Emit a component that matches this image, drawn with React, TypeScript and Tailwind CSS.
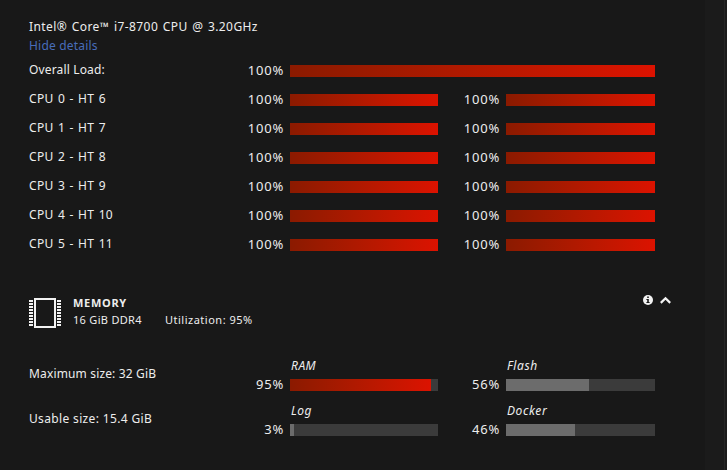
import { clsx } from 'clsx';

type Meter = { label: string; value: number };

const threads = [
  'CPU 0 - HT 6',
  'CPU 1 - HT 7',
  'CPU 2 - HT 8',
  'CPU 3 - HT 9',
  'CPU 4 - HT 10',
  'CPU 5 - HT 11'
];

const memoryRows: { text: string; tracking: string; left: Meter; right: Meter }[] = [
  {
    text: 'Maximum size: 32 GiB',
    tracking: 'tracking-[0.15px]',
    left: { label: 'RAM', value: 95 },
    right: { label: 'Flash', value: 56 }
  },
  {
    text: 'Usable size: 15.4 GiB',
    tracking: 'tracking-[0.35px]',
    left: { label: 'Log', value: 3 },
    right: { label: 'Docker', value: 46 }
  }
];

function Bar({ value }: { value: number }) {
  return (
    <div className="h-3 w-full bg-[#3b3b3b]">
      <div
        className={clsx(
          'h-full',
          value >= 90 ? 'bg-linear-to-r from-[#8b1a00] to-[#dc1200]' : 'bg-[#6c6c6c]'
        )}
        style={{ width: `${value}%` }}
      />
    </div>
  );
}

function Percent({ value }: { value: number }) {
  return (
    <span className="-mt-px pr-1.5 text-right text-[13px] leading-3 tracking-[0.8px]">{value}%</span>
  );
}

function MemoryIcon() {
  const pins = [2, 5, 8, 11, 14, 17, 20, 23, 26];
  return (
    <svg width="33" height="30" viewBox="0 0 33 30" fill="#f2f2f2" shapeRendering="crispEdges">
      <path fillRule="evenodd" d="M5 0h22v30H5zM7 2v26h18V2z" />
      {pins.map((y) => (
        <path key={y} d={`M0 ${y}h4v2H0zM28 ${y}h4v2h-4z`} />
      ))}
    </svg>
  );
}

export default function App() {
  return (
    <div className="flex h-[470px] w-[727px] bg-[#181818] font-['Noto_Sans',sans-serif] text-[12px] text-[#ededed]">
      <main className="w-[705px] pt-[17px] pl-[29px]">
        <div className="leading-[19px]">
          <p className="tracking-[0.42px] [word-spacing:1px]">Intel® Core™ i7-8700 CPU @ 3.20GHz</p>
          <a className="block tracking-[0.2px] text-[#486dba]">Hide details</a>
        </div>

        <section className="mt-[10px]">
          <div className="grid h-[29px] grid-cols-[211px_50px_365px]">
            <span className="-mt-1 leading-[18px] tracking-[0.15px]">Overall Load:</span>
            <Percent value={100} />
            <Bar value={100} />
          </div>
          {threads.map((name) => (
            <div key={name} className="grid h-[29px] grid-cols-[211px_50px_148px_68px_149px]">
              <span className="-mt-1 leading-[18px] tracking-[0.3px] [word-spacing:1px]">{name}</span>
              <Percent value={100} />
              <Bar value={100} />
              <Percent value={100} />
              <Bar value={100} />
            </div>
          ))}
        </section>

        <header className="mt-[30px] flex h-[30px] w-[642px]">
          <MemoryIcon />
          <div className="-mt-[3px] ml-[11px]">
            <h2 className="text-[11px] leading-4 font-bold tracking-[0.7px]">MEMORY</h2>
            <p className="mt-px flex text-[11px] leading-4">
              <span className="w-[92px] tracking-[0.3px]">16 GiB DDR4</span>
              <span className="tracking-[0.5px]">Utilization: 95%</span>
            </p>
          </div>
          <div className="-mt-1 ml-auto flex h-3 items-center gap-[7px]">
            <svg width="10" height="10" viewBox="0 0 10 10">
              <circle cx="5" cy="5" r="5" fill="#f2f2f2" />
              <path d="M4.2 1.4h1.6v1.5H4.2zM3.4 4h2.4v3h.8v1.1H3.4V7h.8V5h-.8z" fill="#181818" />
            </svg>
            <svg width="11" height="8" viewBox="0 0 11 8" fill="none" stroke="#f2f2f2" strokeWidth="2.2">
              <path d="M.8 6.9 5.5 2.2l4.7 4.7" />
            </svg>
          </div>
        </header>

        <section className="mt-[29px]">
          {memoryRows.map(({ text, tracking, left, right }) => (
            <div key={text} className="grid h-[45px] grid-cols-[211px_50px_148px_68px_149px] grid-rows-[22px_12px]">
              <span className={clsx('row-span-2 mt-2 leading-[18px]', tracking)}>{text}</span>
              <span className="col-start-3 pl-px leading-[18px] tracking-[0.5px] italic">{left.label}</span>
              <span className="col-start-5 pl-px leading-[18px] tracking-[0.6px] italic">{right.label}</span>
              <div className="col-span-4 col-start-2 grid grid-cols-subgrid">
                <Percent value={left.value} />
                <Bar value={left.value} />
                <Percent value={right.value} />
                <Bar value={right.value} />
              </div>
            </div>
          ))}
        </section>
      </main>
      <aside className="w-[19px] bg-[#1b1b1b]" />
      <div className="w-[3px] border-l border-[#262626] bg-[#1b1b1b]" />
    </div>
  );
}
